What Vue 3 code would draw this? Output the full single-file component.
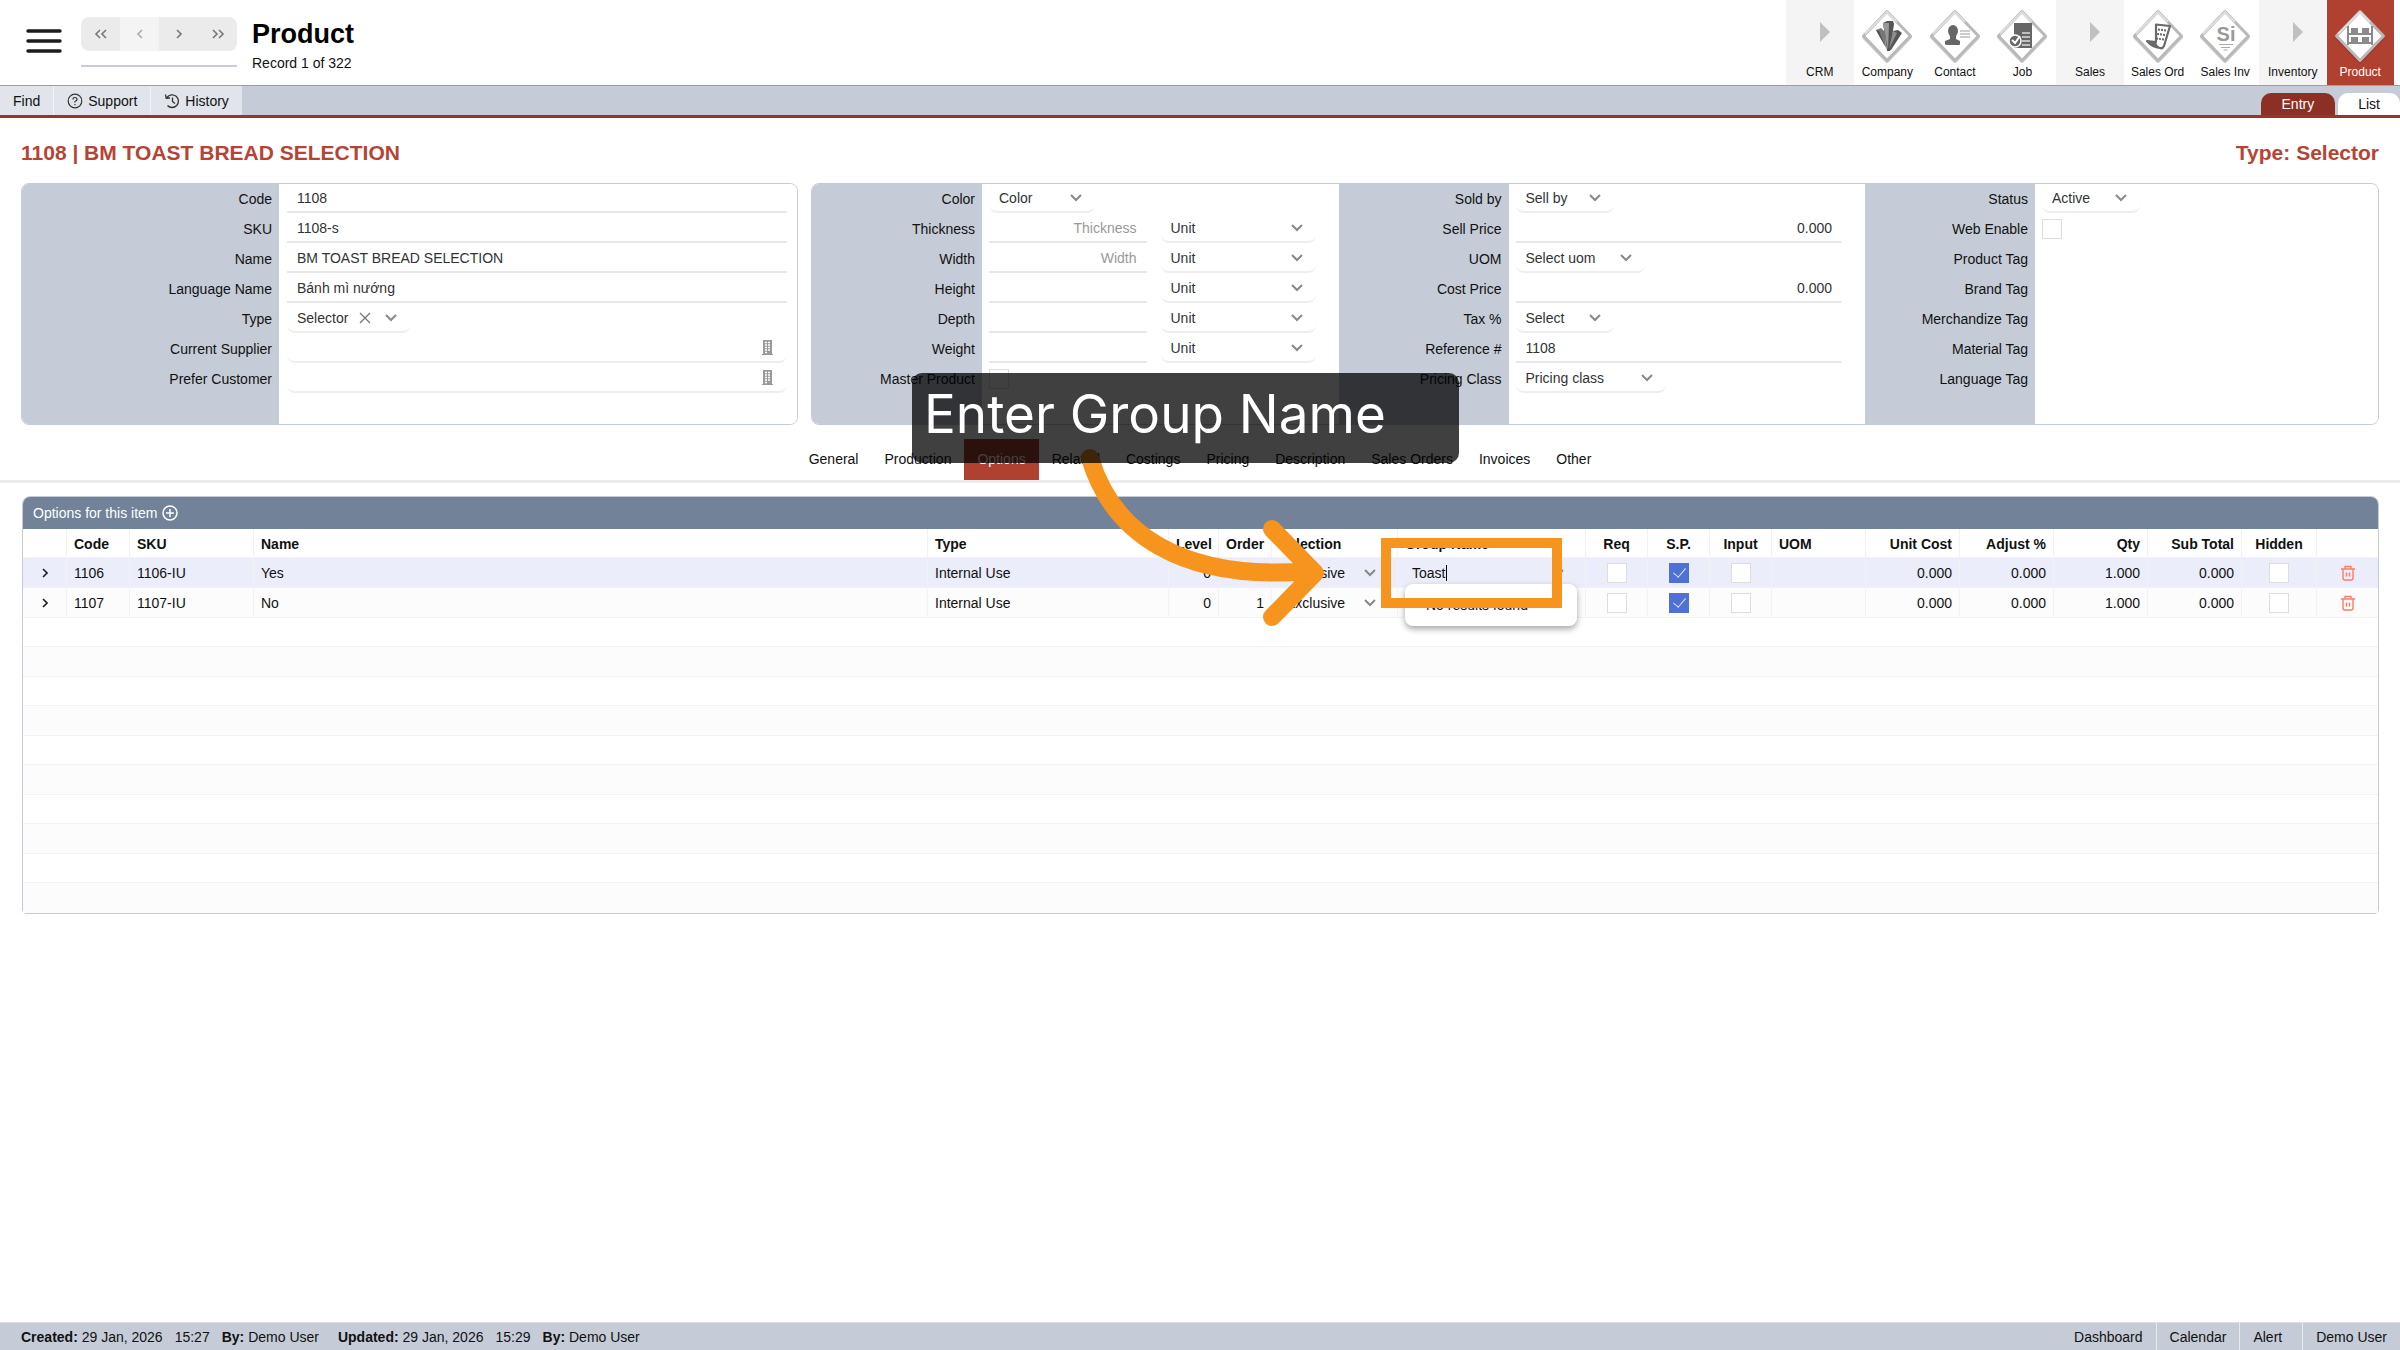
<template>
  <div class="page">
    <header class="top-header">
      <button class="menu-button" aria-label="Menu">
        <svg width="36" height="26" viewBox="0 0 36 26">
          <path d="M2 3h32M2 13h32M2 23h32" stroke="#1c1c1c" stroke-width="3.400" stroke-linecap="round" />
        </svg>
      </button>
      <div class="record-nav">
        <div class="record-buttons">
          <button v-for="nav in recordNav" :key="nav.label" :aria-label="nav.label" :disabled="nav.disabled">
            <svg width="14" height="12" viewBox="0 0 14 12">
              <path :d="nav.icon" fill="none" stroke="currentColor" stroke-width="1.6" />
            </svg>
          </button>
        </div>
        <div class="record-line"></div>
      </div>
      <div class="record-title">
        <h1>Product</h1>
        <p>Record 1 of 322</p>
      </div>
      <nav class="modules">
        <a
          v-for="item in modules"
          :key="item.label"
          href="#"
          class="module"
          :class="{ group: item.group, active: item.active }"
        >
          <svg v-if="item.group" class="module-icon" viewBox="0 0 52 54">
            <path d="M26 13l10 10l-10 10z" fill="#c0c0c0" />
          </svg>
          <svg v-else class="module-icon" viewBox="0 0 52 54">
            <path d="M26 4L49 28L26 52L3 28z" fill="none" stroke="#000" stroke-opacity="0.18" stroke-width="4" stroke-linejoin="round" />
            <path d="M26 2.500L49.500 27L26 51.500L2.500 27z" fill="#fff" stroke="#b9b9b9" stroke-width="3" stroke-linejoin="round" />
            <path d="M4 25L26 3L36 13" fill="none" stroke="#dedede" stroke-width="2" stroke-linejoin="round" />
            <g v-if="item.icon === 'company'">
              <path d="M22 14l4-2h6l1 3l-4 27h-3z" fill="#555" />
              <path d="M22 14h6l-1 27z" fill="#999" />
              <path d="M15 21l5-2l4 4l1 16z" fill="#777" />
              <path d="M15 21l3 1l6 15z" fill="#4f4f4f" />
              <path d="M32 22l5-1l4 3l-11 17h-3z" fill="#555" />
              <path d="M32 22l4 2l-8 16z" fill="#8d8d8d" />
            </g>
            <g v-if="item.icon === 'contact'">
              <ellipse cx="24" cy="22" rx="5" ry="6" fill="#666" />
              <path d="M21 26h6v4l4 2v3q0 1-1 1H18q-2 0-2-1v-3l5-2z" fill="#666" />
              <path d="M31 22h10M31 25h10M31 28h10" stroke="#999" stroke-width="1.200" />
            </g>
            <g v-if="item.icon === 'job'">
              <path d="M18 14h18v25H18z" fill="#666" />
              <path d="M26 24h8M26 28h8M26 32h8M26 36h8" stroke="#ddd" stroke-width="1.500" />
              <circle cx="19" cy="32" r="6" fill="#666" stroke="#fff" stroke-width="1.500" />
              <path d="M16 31l3 3l5-7" fill="none" stroke="#fff" stroke-width="2" />
            </g>
            <g v-if="item.icon === 'order'">
              <path d="M24 15.500l14 1.500l-6 20q-1.500 3-4 2q-8-1-13-7l9 1z" fill="#fff" stroke="#6a6a6a" stroke-width="2.200" stroke-linejoin="round" />
              <path d="M15 32l9 1q1 4 5 6q-9-1-14-7z" fill="#6a6a6a" />
              <path d="M26 20.500l9 1M25 25l9 1M24 29.500l8 1" stroke="#666" stroke-width="2" stroke-dasharray="2 1" />
            </g>
            <g v-if="item.icon === 'invoice'">
              <text x="27" y="32" class="si-text" text-anchor="middle">Si</text>
              <path d="M20 35.500h14M22 38.500h9M24.500 41h4" stroke="#aaa" stroke-width="1.200" />
            </g>
            <g v-if="item.icon === 'product'" fill="#8a8a8a">
              <path d="M13 17h2v19h-2zM37 17h2v19h-2zM15 24h22v2H15zM15 33h22v2H15z" />
              <path d="M17 19h7v5h-7zM28 19h7v5h-7zM17 28h7v5h-7zM28 28h7v5h-7z" />
            </g>
          </svg>
          <span>{{ item.label }}</span>
        </a>
      </nav>
    </header>

    <div class="toolbar">
      <button class="tool">Find</button>
      <button class="tool">
        <svg width="16" height="16" viewBox="0 0 16 16" fill="none" stroke="#333" stroke-width="1.200">
          <circle cx="8" cy="8" r="6.800" />
          <path d="M6 6.500Q6 4.500 8 4.500T10 6.500Q10 7.500 8.700 8T8 9.500M8 11v1.300" />
        </svg>
        Support
      </button>
      <button class="tool">
        <svg width="16" height="16" viewBox="0 0 16 16" fill="none" stroke="#333" stroke-width="1.300">
          <path d="M3 4.500A6.300 6.300 0 1 1 3.500 12.500M1.500 1.500L2.200 5.200L6 5M8.500 4.500V8.500L11 10.500" />
        </svg>
        History
      </button>
      <div class="view-tabs">
        <button class="view-tab active">Entry</button>
        <button class="view-tab">List</button>
      </div>
    </div>

    <main>
      <div class="product-heading">
        <h2>1108 | BM TOAST BREAD SELECTION</h2>
        <h2>Type: Selector</h2>
      </div>

      <div class="panels">
        <section v-for="(panel, p) in panels" :key="p" class="panel">
          <div v-for="(column, c) in panel" :key="c" class="column" :class="column.size">
            <div v-for="field in column.fields" :key="field.label" class="field">
              <label :for="fieldId(field.label)">{{ field.label }}</label>
              <div class="value">
                <input
                  v-if="field.kind === 'text' || field.kind === 'number'"
                  :id="fieldId(field.label)"
                  type="text"
                  class="text-input"
                  :class="{ numeric: field.kind === 'number' }"
                  :placeholder="field.placeholder"
                  v-model="field.value"
                />
                <div v-if="field.kind === 'lookup'" class="lookup">
                  <input :id="fieldId(field.label)" type="text" v-model="field.value" />
                  <svg width="11" height="16" viewBox="0 0 11 16">
                    <path d="M1 0h9v14h1v1H0v-1h1z" fill="#9a9a9a" />
                    <path d="M3 2.500h2M6 2.500h2M3 5h2M6 5h2M3 7.500h2M6 7.500h2M3 10h2M6 10h2M3 12.500h2" stroke="#fff" stroke-width="1.300" />
                  </svg>
                </div>
                <div v-if="field.kind === 'select'" class="select-box" :class="field.size">
                  <select :id="fieldId(field.label)">
                    <option>{{ field.value }}</option>
                  </select>
                  <button v-if="field.clearable" class="clear" aria-label="Clear">
                    <svg width="12" height="12" viewBox="0 0 12 12">
                      <path d="M1 1l10 10M11 1L1 11" stroke="#777" stroke-width="1.300" />
                    </svg>
                  </button>
                  <svg class="chevron" viewBox="0 0 12 8"><path d="M1 1l5 5l5-5" /></svg>
                </div>
                <input v-if="field.kind === 'check'" :id="fieldId(field.label)" type="checkbox" class="check" />
                <div v-if="field.unit" class="select-box unit">
                  <select :aria-label="field.label + ' unit'">
                    <option>Unit</option>
                  </select>
                  <svg class="chevron" viewBox="0 0 12 8"><path d="M1 1l5 5l5-5" /></svg>
                </div>
              </div>
            </div>
          </div>
        </section>
      </div>

      <nav class="section-tabs">
        <a
          v-for="tab in sectionTabs"
          :key="tab"
          href="#"
          :class="{ active: tab === activeTab }"
          @click.prevent="activeTab = tab"
        >{{ tab }}</a>
      </nav>

      <section class="options">
        <div class="options-title">
          Options for this item
          <button aria-label="Add option">
            <svg width="16" height="16" viewBox="0 0 16 16" fill="none" stroke="#fff" stroke-width="1.500">
              <circle cx="8" cy="8" r="7" />
              <path d="M4 8h8M8 4v8" />
            </svg>
          </button>
        </div>
        <table>
          <colgroup>
            <col class="c-expand" />
            <col class="c-code" />
            <col class="c-sku" />
            <col />
            <col class="c-type" />
            <col class="c-level" />
            <col class="c-order" />
            <col class="c-selection" />
            <col class="c-group" />
            <col class="c-flag" />
            <col class="c-flag" />
            <col class="c-flag" />
            <col class="c-num" />
            <col class="c-num" />
            <col class="c-num" />
            <col class="c-num" />
            <col class="c-num" />
            <col class="c-hidden" />
            <col class="c-delete" />
          </colgroup>
          <thead>
            <tr>
              <th></th>
              <th>Code</th>
              <th>SKU</th>
              <th>Name</th>
              <th>Type</th>
              <th class="right">Level</th>
              <th class="right">Order</th>
              <th>Selection</th>
              <th>Group Name</th>
              <th class="center">Req</th>
              <th class="center">S.P.</th>
              <th class="center">Input</th>
              <th>UOM</th>
              <th class="right">Unit Cost</th>
              <th class="right">Adjust %</th>
              <th class="right">Qty</th>
              <th class="right">Sub Total</th>
              <th class="center">Hidden</th>
              <th></th>
            </tr>
          </thead>
          <tbody>
            <tr v-for="(row, index) in rows" :key="row.code" :class="{ selected: index === 0 }">
              <td class="center">
                <button class="icon-button" aria-label="Expand">
                  <svg width="6" height="10" viewBox="0 0 6 10">
                    <path d="M1 1l4 4l-4 4" fill="none" stroke="#222" stroke-width="1.600" />
                  </svg>
                </button>
              </td>
              <td>{{ row.code }}</td>
              <td>{{ row.sku }}</td>
              <td>{{ row.name }}</td>
              <td>Internal Use</td>
              <td class="right">0</td>
              <td class="right">{{ row.order }}</td>
              <td>
                <div class="cell-select">
                  <select aria-label="Selection"><option>Exclusive</option></select>
                  <svg class="chevron" viewBox="0 0 12 8"><path d="M1 1l5 5l5-5" /></svg>
                </div>
              </td>
              <td>
                <div class="cell-select">
                  <input type="text" aria-label="Group Name" v-model="row.group" />
                  <span v-if="index === 0" class="caret"></span>
                  <svg class="chevron" viewBox="0 0 12 8"><path d="M1 1l5 5l5-5" /></svg>
                  <div v-if="index === 0" class="no-results">No results found</div>
                </div>
              </td>
              <td class="center"><input type="checkbox" class="check" aria-label="Req" /></td>
              <td class="center"><input type="checkbox" class="check" aria-label="S.P." checked /></td>
              <td class="center"><input type="checkbox" class="check" aria-label="Input" /></td>
              <td></td>
              <td class="right">0.000</td>
              <td class="right">0.000</td>
              <td class="right">1.000</td>
              <td class="right">0.000</td>
              <td class="center"><input type="checkbox" class="check" aria-label="Hidden" /></td>
              <td class="center">
                <button class="icon-button" aria-label="Delete">
                  <svg width="14" height="16" viewBox="0 0 14 16" fill="none" stroke="#ff7b69" stroke-width="1.400">
                    <path d="M0 4h14M4 4V1.500h6V4M2 4v9q0 2 2 2h6q2 0 2-2V4M5.500 7.500v4M8.500 7.500v4" />
                  </svg>
                </button>
              </td>
            </tr>
          </tbody>
        </table>
        <div v-for="n in 10" :key="n" class="empty-row" :class="{ shaded: n % 2 === 0 }"></div>
      </section>
    </main>

    <footer class="status-bar">
      <div class="audit">
        <span><b>Created:</b> 29 Jan, 2026</span>
        <span>15:27</span>
        <span class="by"><b>By:</b> Demo User</span>
        <span><b>Updated:</b> 29 Jan, 2026</span>
        <span>15:29</span>
        <span><b>By:</b> Demo User</span>
      </div>
      <nav>
        <a href="#">Dashboard</a>
        <a href="#">Calendar</a>
        <a href="#" class="alert">Alert</a>
        <a href="#">Demo User</a>
      </nav>
    </footer>

    <!-- guide step drawn over the form -->
    <div class="guide-box"></div>
    <svg class="guide-arrow" width="260" height="190" viewBox="0 0 260 190">
      <path
        d="M20 18C42 92 110 142 240 131M202 89L245 133L202 177"
        fill="none"
        stroke="#f7941d"
        stroke-width="18"
        stroke-linecap="round"
        stroke-linejoin="round"
      />
    </svg>
    <div class="guide-label">Enter Group Name</div>
  </div>
</template>

<script setup>
import { ref } from 'vue';

const recordNav = [
  { label: 'First', icon: 'M6 2L2 6l4 4M12 2L8 6l4 4' },
  { label: 'Previous', icon: 'M9 2L5 6l4 4', disabled: true },
  { label: 'Next', icon: 'M5 2l4 4l-4 4' },
  { label: 'Last', icon: 'M2 2l4 4l-4 4M8 2l4 4l-4 4' }
];

const modules = [
  { label: 'CRM', group: true },
  { label: 'Company', icon: 'company' },
  { label: 'Contact', icon: 'contact' },
  { label: 'Job', icon: 'job' },
  { label: 'Sales', group: true },
  { label: 'Sales Ord', icon: 'order' },
  { label: 'Sales Inv', icon: 'invoice' },
  { label: 'Inventory', group: true },
  { label: 'Product', icon: 'product', active: true }
];

// Form panels: each panel holds one or more columns of fields
const panels = ref([
  [
    {
      size: 'wide',
      fields: [
        { label: 'Code', kind: 'text', value: '1108' },
        { label: 'SKU', kind: 'text', value: '1108-s' },
        { label: 'Name', kind: 'text', value: 'BM TOAST BREAD SELECTION' },
        { label: 'Language Name', kind: 'text', value: 'Bánh mì nướng' },
        { label: 'Type', kind: 'select', value: 'Selector', size: 'w-type', clearable: true },
        { label: 'Current Supplier', kind: 'lookup', value: '' },
        { label: 'Prefer Customer', kind: 'lookup', value: '' }
      ]
    }
  ],
  [
    {
      size: 'measures',
      fields: [
        { label: 'Color', kind: 'select', value: 'Color', size: 'w-color' },
        { label: 'Thickness', kind: 'number', value: '', placeholder: 'Thickness', unit: true },
        { label: 'Width', kind: 'number', value: '', placeholder: 'Width', unit: true },
        { label: 'Height', kind: 'number', value: '', unit: true },
        { label: 'Depth', kind: 'number', value: '', unit: true },
        { label: 'Weight', kind: 'number', value: '', unit: true },
        { label: 'Master Product', kind: 'check' }
      ]
    },
    {
      size: 'prices',
      fields: [
        { label: 'Sold by', kind: 'select', value: 'Sell by', size: 'w-small' },
        { label: 'Sell Price', kind: 'number', value: '0.000' },
        { label: 'UOM', kind: 'select', value: 'Select uom', size: 'w-uom' },
        { label: 'Cost Price', kind: 'number', value: '0.000' },
        { label: 'Tax %', kind: 'select', value: 'Select', size: 'w-small' },
        { label: 'Reference #', kind: 'text', value: '1108' },
        { label: 'Pricing Class', kind: 'select', value: 'Pricing class', size: 'w-pricing' }
      ]
    },
    {
      size: 'tags',
      fields: [
        { label: 'Status', kind: 'select', value: 'Active', size: 'w-small' },
        { label: 'Web Enable', kind: 'check' },
        { label: 'Product Tag' },
        { label: 'Brand Tag' },
        { label: 'Merchandize Tag' },
        { label: 'Material Tag' },
        { label: 'Language Tag' }
      ]
    }
  ]
]);

const fieldId = (label) => 'field-' + label.toLowerCase().replace(/[^a-z]+/g, '-');

const sectionTabs = [
  'General',
  'Production',
  'Options',
  'Related',
  'Costings',
  'Pricing',
  'Description',
  'Sales Orders',
  'Invoices',
  'Other'
];
const activeTab = ref('Options');

const rows = ref([
  { code: '1106', sku: '1106-IU', name: 'Yes', order: 0, group: 'Toast' },
  { code: '1107', sku: '1107-IU', name: 'No', order: 1, group: '' }
]);
</script>

<style>
body {
  margin: 0;
  background: #fff;
}
</style>

<style scoped>
* {
  box-sizing: border-box;
}

.page {
  position: relative;
  display: flex;
  flex-direction: column;
  min-height: 100vh;
  font-family: "Liberation Sans", Arial, sans-serif;
  font-size: 14px;
  line-height: 20px;
  color: #111;
}

button,
input,
select {
  font: inherit;
  color: inherit;
  margin: 0;
  padding: 0;
  border: 0;
  background: transparent;
}

button {
  cursor: pointer;
}

a {
  color: inherit;
  text-decoration: none;
}

svg {
  display: block;
}

/* header */
.top-header {
  display: flex;
  height: 86px;
  padding: 0 6px 0 26px;
  border-bottom: 1px solid #9a9f9f;
}

.menu-button {
  align-self: flex-start;
  margin: 28px 19px 0 0;
}

.record-nav {
  width: 156px;
  padding-top: 17px;
}

.record-buttons {
  display: flex;
  height: 34px;
  border-radius: 8px;
  overflow: hidden;
}

.record-buttons button {
  flex: 1;
  display: flex;
  align-items: center;
  justify-content: center;
  background: #ebebeb;
  color: #777;
}

.record-buttons button:disabled {
  background: #f4f4f4;
  color: #aaa;
}

.record-line {
  height: 2px;
  margin-top: 14px;
  background: #c6ccd9;
}

.record-title {
  padding: 18px 0 0 15px;
}

.record-title h1 {
  margin: 0;
  font-size: 27px;
  line-height: 32px;
  color: #000;
}

.record-title p {
  margin: 3px 0 0;
}

.modules {
  display: flex;
  width: 608px;
  margin-left: auto;
}

.module {
  flex: 1 1 0;
  display: flex;
  flex-direction: column;
  align-items: center;
  min-width: 0;
  padding-top: 9px;
  font-size: 12px;
  line-height: 16px;
}

.module.group {
  background: #f4f4f4;
}

.module.active {
  background: #b04030;
  color: #fff;
}

.module-icon {
  width: 52px;
  height: 54px;
  margin-bottom: 1px;
}

.si-text {
  font-size: 20px;
  font-weight: bold;
  fill: #999;
}

/* toolbar */
.toolbar {
  display: flex;
  height: 32px;
  background: #c6ccd7;
  border-bottom: 3px solid #963528;
}

.tool {
  display: flex;
  align-items: center;
  gap: 5px;
  padding: 0 13px;
  background: #e1e4ea;
  border-right: 1px solid #f2f3f6;
}

.tool:last-of-type {
  border-right: 0;
}

.view-tabs {
  display: flex;
  align-items: flex-end;
  gap: 3px;
  margin-left: auto;
}

.view-tab {
  height: 22px;
  padding: 0 20px;
  background: #fff;
  border-radius: 10px 10px 0 0;
}

.view-tab.active {
  padding: 0 21px;
  background: #8c3025;
  color: #fff;
}

/* form */
.product-heading {
  display: flex;
  justify-content: space-between;
  padding: 22px 21px 18px;
}

.product-heading h2 {
  margin: 0;
  font-size: 21px;
  line-height: 25px;
  color: #b64435;
}

.panels {
  display: grid;
  grid-template-columns: 777fr 1568fr;
  gap: 13px;
  padding: 0 21px;
}

.panel {
  display: flex;
  min-width: 0;
  border: 1px solid #c6ccd7;
  border-radius: 8px;
  overflow: hidden;
}

.column {
  display: flex;
  flex-direction: column;
  flex: 1 1 0;
  min-width: 0;
  --label-width: 170px;
  padding-bottom: 30px;
  background: linear-gradient(to right, #c6ccd7 var(--label-width), #fff var(--label-width));
}

.column.wide {
  --label-width: 257px;
}

.column.tags {
  flex: none;
  width: 513px;
}

.field {
  display: flex;
  height: 30px;
}

.field label {
  flex: none;
  width: var(--label-width);
  padding: 5px 7px 5px 0;
  text-align: right;
}

.value {
  flex: 1;
  display: flex;
  align-items: flex-start;
  min-width: 0;
  padding: 0 23px 0 7px;
  color: #333;
}

.wide .value {
  padding: 0 10px 0 8px;
}

.text-input {
  flex: 1;
  min-width: 0;
  height: 29px;
  padding: 0 10px;
  border-bottom: 2px solid #e8e8e8;
}

.text-input.numeric {
  text-align: right;
}

.text-input::placeholder {
  color: #999;
}

.lookup {
  flex: 1;
  display: flex;
  align-items: center;
  height: 29px;
  padding: 0 14px 0 10px;
  border-bottom: 2px solid #eee;
  border-radius: 8px;
}

.lookup input {
  flex: 1;
}

.select-box {
  position: relative;
  display: flex;
  flex: none;
  align-items: center;
  height: 29px;
  border-bottom: 2px solid #eee;
  border-radius: 8px;
}

.select-box select {
  appearance: none;
  width: 100%;
  height: 100%;
  padding: 0 26px 0 10px;
  outline: none;
}

.select-box .chevron {
  right: 13px;
}

.chevron {
  position: absolute;
  width: 12px;
  height: 8px;
  fill: none;
  stroke: #888;
  stroke-width: 2px;
  pointer-events: none;
}

.clear {
  position: absolute;
  right: 39px;
}

.w-small {
  width: 98px;
}

.w-color {
  width: 106px;
}

.w-type {
  width: 123px;
}

.w-uom {
  width: 129px;
}

.w-pricing {
  width: 150px;
}

.unit {
  width: 155px;
  margin-left: 14px;
}

.check {
  appearance: none;
  flex: none;
  width: 20px;
  height: 20px;
  border: 1px solid #ddd;
  background: #fff;
}

.value .check {
  margin-top: 5px;
}

.check:checked {
  border-color: #4f70d4;
  background: #4f70d4;
}

.check:checked::after {
  content: "";
  display: block;
  width: 6px;
  height: 11px;
  margin: 1px 0 0 6px;
  border: solid #dfe6fa;
  border-width: 0 1px 1px 0;
  transform: rotate(40deg);
}

/* section tabs */
.section-tabs {
  display: flex;
  justify-content: center;
  margin-top: 14px;
  border-bottom: 3px solid #ebebeb;
}

.section-tabs a {
  padding: 10px 13px 11px;
}

.section-tabs a.active {
  background: #b04030;
  color: #fff;
}

/* options table */
.options {
  margin: 13px 21px 0 22px;
  border: 1px solid #c6ccd7;
  border-radius: 8px 8px 4px 4px;
}

.options-title {
  display: flex;
  align-items: center;
  gap: 4px;
  height: 32px;
  padding: 0 10px;
  background: #718299;
  border-radius: 7px 7px 0 0;
  color: #fff;
}

table {
  width: 100%;
  table-layout: fixed;
  border-collapse: separate;
  border-spacing: 0;
}

th,
td {
  height: 30px;
  padding: 0 7px;
  border-right: 1px solid #f2f2f2;
  border-bottom: 1px solid #f2f2f2;
  text-align: left;
  white-space: nowrap;
}

th:last-child,
td:last-child {
  border-right: 0;
}

th {
  height: 29px;
  padding-top: 2px;
}

tbody tr {
  background: #fcfcfc;
}

tbody tr.selected {
  background: #ebedfa;
}

.right {
  text-align: right;
}

.center {
  text-align: center;
}

td.center {
  padding: 0;
}

td .check {
  display: block;
  margin: 0 auto;
}

.icon-button {
  display: block;
  margin: 0 auto;
}

.cell-select {
  position: relative;
  display: flex;
  align-items: center;
  height: 29px;
  padding-left: 7px;
}

.cell-select select {
  appearance: none;
  width: 100%;
}

.cell-select input {
  width: 34px;
}

.cell-select .chevron {
  right: 14px;
}

.caret {
  width: 1px;
  height: 16px;
  background: #000;
}

.no-results {
  position: absolute;
  top: 26px;
  left: 0;
  width: 172px;
  padding: 11px 21px;
  background: #fff;
  border-radius: 8px;
  box-shadow: 0 3px 6px rgba(0, 0, 0, 0.35);
  z-index: 1;
}

.c-expand {
  width: 44px;
}

.c-code {
  width: 63px;
}

.c-sku {
  width: 124px;
}

.c-type {
  width: 241px;
}

.c-level {
  width: 50px;
}

.c-order {
  width: 53px;
}

.c-selection {
  width: 126px;
}

.c-group {
  width: 188px;
}

.c-flag {
  width: 62px;
}

.c-num {
  width: 94px;
}

.c-hidden {
  width: 75px;
}

.c-delete {
  width: 61px;
}

.empty-row {
  height: 29px;
  border-bottom: 1px solid #f2f2f2;
}

.empty-row.shaded {
  height: 30px;
  background: #fcfcfc;
}

.empty-row:last-child {
  border-bottom: 0;
}

/* footer */
.status-bar {
  display: flex;
  justify-content: space-between;
  height: 28px;
  margin-top: auto;
  padding-left: 21px;
  background: #c6ccd7;
  border-top: 1px solid #dde0e6;
  line-height: 28px;
}

.audit {
  display: flex;
  gap: 12px;
}

.audit .by {
  margin-right: 7px;
}

.status-bar nav {
  display: flex;
}

.status-bar nav a {
  padding: 0 13px;
  border-left: 1px solid #e8eaee;
}

.status-bar nav a:first-child {
  border-left: 0;
}

.status-bar nav a.alert {
  padding-right: 20px;
}

/* guide overlay */
.guide-box {
  position: absolute;
  top: 538px;
  left: 1381px;
  width: 181px;
  height: 70px;
  border: 10px solid #f7941d;
  z-index: 2;
}

.guide-arrow {
  position: absolute;
  top: 440px;
  left: 1070px;
  z-index: 2;
}

.guide-label {
  position: absolute;
  top: 373px;
  left: 912px;
  width: 547px;
  height: 90px;
  padding: 0 12px;
  background: rgba(0, 0, 0, 0.75);
  border-radius: 10px;
  color: #fff;
  font-family: Inter, sans-serif;
  font-size: 53px;
  line-height: 82px;
  white-space: nowrap;
  z-index: 3;
}
</style>
